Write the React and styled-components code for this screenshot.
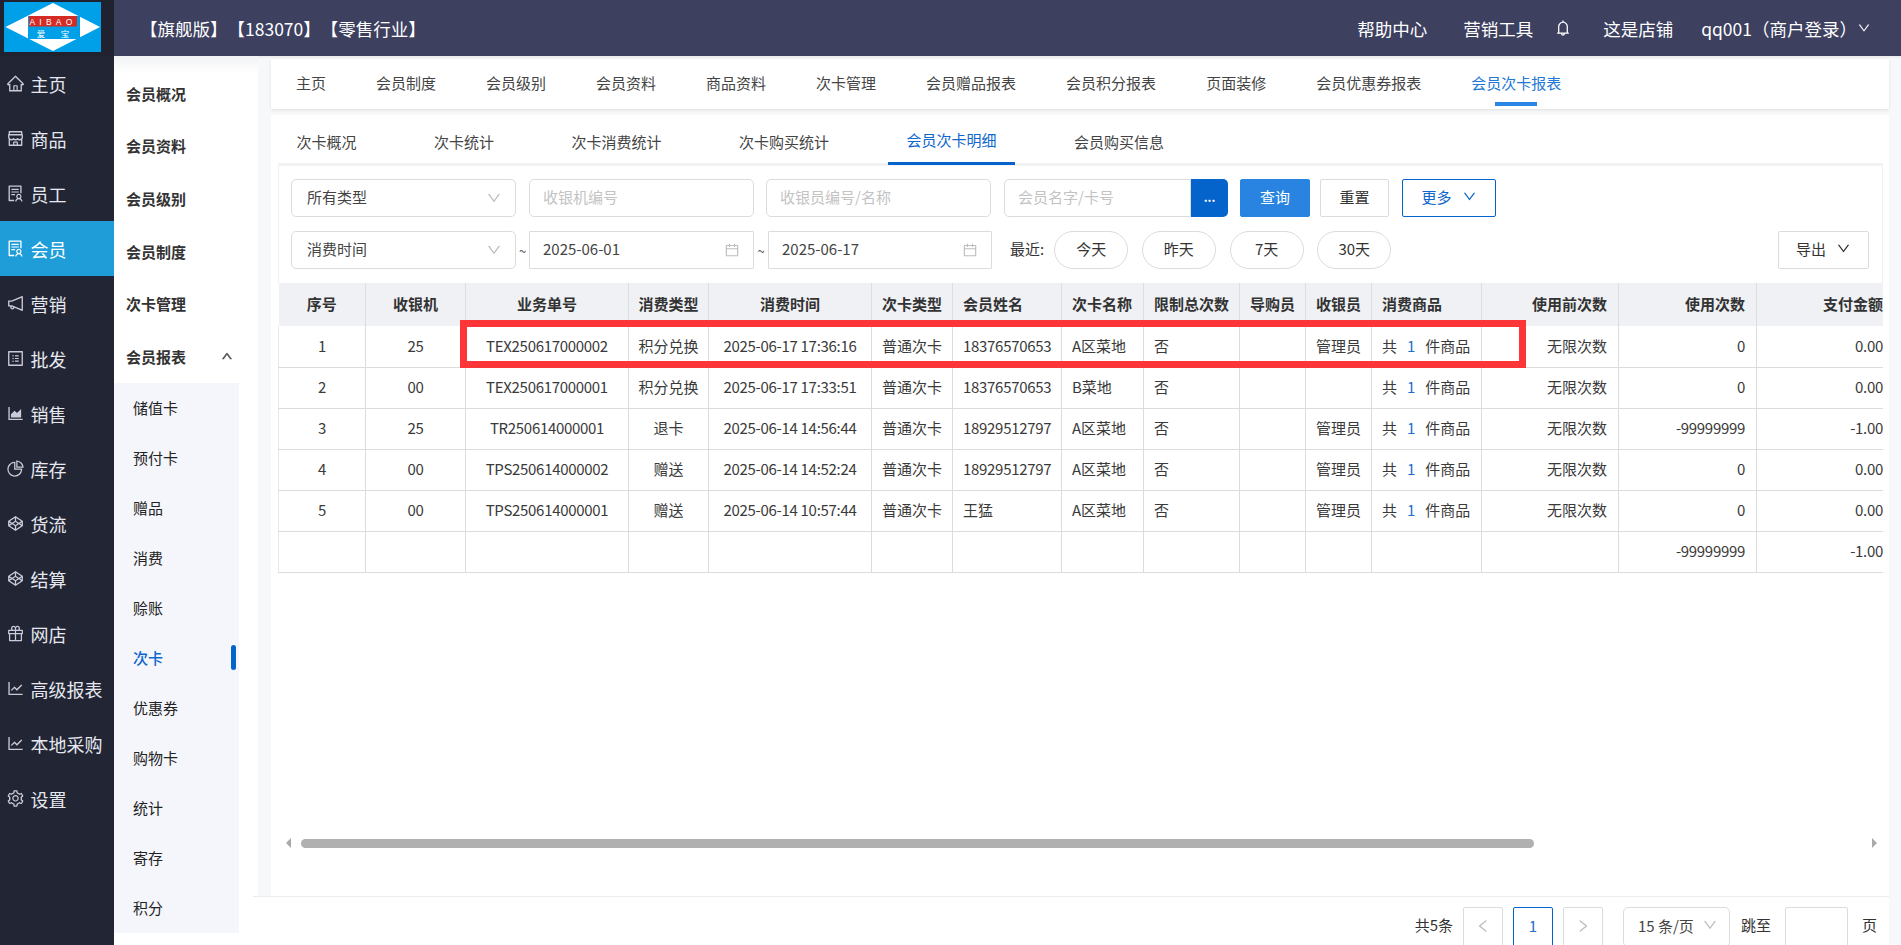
import React from "react";
import styled, { createGlobalStyle } from "styled-components";
import {
  AiOutlineHome, AiOutlineShop, AiOutlineSolution, AiOutlineNotification, AiOutlineProfile,
  AiOutlineAreaChart, AiOutlinePieChart, AiOutlineCodepen, AiOutlineGift, AiOutlineLineChart,
  AiOutlineSetting, AiOutlineBell, AiOutlineCalendar, AiOutlineDown, AiOutlineUp, AiOutlineLeft, AiOutlineRight,
} from "react-icons/ai";

const FONT = `"Noto Sans CJK SC", "Noto Sans", sans-serif`;

const Global = createGlobalStyle`
  html, body { margin: 0; padding: 0; height: 100%; overflow: hidden; }
  body { font-family: ${FONT}; font-size: 15px; color: #333; background: #fff; text-spacing-trim: space-all; }
  * { box-sizing: border-box; }
`;

const Shell = styled.div`
  position: relative; display: flex; width: 1901px; height: 945px; overflow: hidden; background: #fff;
`;
const Sidebar = styled.aside`
  width: 114px; flex: none; background: #222533; display: flex; flex-direction: column;
`;
const LogoBox = styled.div`
  height: 56px; padding: 2px 0 0 4px; background: #20232f;
  svg { display: block; }
`;
const NavItem = styled.div`
  height: 55px; display: flex; align-items: center; padding-left: 6px; gap: 5.5px;
  font-size: 18px; color: ${p => (p.$active ? "#fff" : "#e6e8f0")};
  background: ${p => (p.$active ? "#1e9dd8" : "transparent")};
  svg { width: 19px; height: 19px; flex: none; color: ${p => (p.$active ? "#fff" : "#c9ccd8")}; }
`;
const RightCol = styled.div`
  flex: 1; min-width: 0; display: flex; flex-direction: column;
`;
const TopBar = styled.header`
  height: 56px; flex: none; background: #3d405f; color: #fff; display: flex; align-items: center;
  justify-content: space-between; padding: 0 30px 0 26px;
`;
const Brand = styled.div`
  font-size: 17.5px; white-space: nowrap;
`;
const TopRight = styled.div`
  display: flex; align-items: center; font-size: 17.5px; white-space: nowrap;
`;
const TopLink = styled.span`
  margin-left: ${p => p.$ml}px;
`;
const Bell = styled(AiOutlineBell)`
  margin-left: 21px; width: 18px; height: 18px;
`;
const UserChevron = styled(AiOutlineDown)`
  width: 14px; height: 14px;
`;
const Body = styled.div`
  flex: 1; min-height: 0; display: flex;
`;
const SubNav = styled.nav`
  width: 144px; flex: none; padding-top: 11px; background: linear-gradient(#f2f3f5, #fff 18px);
`;
const SubGroup = styled.div`
  height: 52.6px; display: flex; align-items: center; justify-content: space-between;
  padding: 0 25px 0 12px; font-weight: 700; color: #333; font-size: 15px;
  svg { width: 12px; height: 12px; color: #555; stroke: #555; stroke-width: 70; }
`;
const SubList = styled.div`
  width: 125px; background: #f4f6fb;
`;
const SubItem = styled.div`
  position: relative; height: 50px; display: flex; align-items: center; padding-left: 19px;
  color: ${p => (p.$active ? "#0f66cc" : "#222")}; font-weight: ${p => (p.$active ? 500 : 400)};
  ${p => p.$active && `&::after { content: ""; position: absolute; right: 3px; top: 12px; width: 5px; height: 25px; border-radius: 3px; background: #0563cc; }`}
`;
const Main = styled.main`
  flex: 1; min-width: 0; display: flex; flex-direction: column; background: #f7f8fa;
`;
const Content = styled.div`
  flex: 1; min-height: 0; display: flex; flex-direction: column; padding: 3px 12px 0 13px; background: linear-gradient(#e9e9eb, #f7f8fa 3px);
`;
const TabsCard = styled.div`
  height: 50px; flex: none; background: #fff; box-shadow: 0 1px 3px rgba(0,0,0,.1);
  display: flex; gap: 50px; padding-left: 25px; margin-bottom: 6px;
`;
const Tab = styled.div`
  position: relative; height: 46px; display: flex; align-items: center; color: ${p => (p.$active ? "#2278d4" : "#444")};
  white-space: nowrap;
  ${p => p.$active && `&::after { content: ""; position: absolute; left: 24px; right: 24px; bottom: -1px; height: 4px; background: #2b85e4; }`}
`;
const Panel = styled.section`
  flex: 1; min-height: 0; background: #fff; display: flex; flex-direction: column; padding: 0 6px 0 7px;
`;
const SubTabs = styled.div`
  height: 51px; flex: none; display: flex; border-bottom: 3px solid #f1f2f4;
`;
const SubTab = styled.div`
  height: 50px; padding: 2px 18.5px 0; margin-right: 40.5px; display: flex; align-items: center; white-space: nowrap;
  color: ${p => (p.$active ? "#0f66cc" : "#444")};
  ${p => p.$active && `border-bottom: 3px solid #0563cc;`}
`;
const FilterCard = styled.div`
  flex: none; padding: 13px 13px 14px 12px; display: flex; flex-direction: column; gap: 14px;
  border-left: 1px solid #eff0f2; border-right: 1px solid #eff0f2;
`;
const FilterRow = styled.div`
  display: flex; align-items: center; height: 38px;
`;
const Field = styled.div`
  width: ${p => p.$w}px; margin-right: ${p => p.$mr || 0}px; height: 38px; flex: none; display: flex; align-items: center; justify-content: space-between;
  border: 1px solid #dcdcdc; border-radius: ${p => (p.$flatRight ? "5px 0 0 5px" : p.$square ? "1px" : "5px")};
  padding: 0 13px 3px ${p => p.$pl || 13}px; color: ${p => (p.$placeholder ? "#c3c3c3" : "#444")}; background: #fff;
  svg { width: 16px; height: 16px; color: #bdbdbd; flex: none; transform: translateY(1px); }
`;
const DotButton = styled.div`
  width: 37px; height: 38px; flex: none; margin-right: 12px; background: #0563cc; color: #fff; border-radius: 0 5px 5px 0;
  display: flex; align-items: center; justify-content: center; font-size: 12px; font-weight: 700; padding-bottom: 3px;
`;
const Button = styled.div`
  width: ${p => p.$w}px; margin-right: ${p => p.$mr || 0}px; margin-left: ${p => (p.$end ? "auto" : "0")};
  height: 38px; flex: none; display: flex; align-items: center; justify-content: center; gap: 10px; border-radius: 2px; padding-bottom: 3px;
  background: ${p => (p.$primary ? "#2884e0" : "#fff")}; color: ${p => (p.$primary ? "#fff" : p.$outline ? "#0f66cc" : "#333")};
  border: 1px solid ${p => (p.$primary ? "#2884e0" : p.$outline ? "#0563cc" : "#dcdcdc")};
  svg { width: 15px; height: 15px; }
`;
const Tilde = styled.span`
  width: ${p => p.$w || 14}px; flex: none; text-align: center; color: #555; font-size: 13px;
`;
const RecentLabel = styled.span`
  margin: 0 10px 0 18px; padding-bottom: 3px; white-space: nowrap; color: #333;
`;
const Pill = styled.div`
  width: 74px; height: 38px; flex: none; margin-right: 13.7px; border: 1px solid #dcdcdc; border-radius: 19px; padding-bottom: 3px;
  display: flex; align-items: center; justify-content: center; color: #333;
`;
const TableWrap = styled.div`
  flex: none; overflow: hidden;
`;
const Table = styled.table`
  table-layout: fixed; border-collapse: collapse; width: 1615px;
`;
const Col = styled.col`
  width: ${p => p.$w}px;
`;
const Th = styled.th`
  height: 43px; padding: 0 ${p => (p.$align === "right" ? 11 : p.$align === "left" ? 10 : 0)}px 2px; background: #eff1f5; color: #333; font-weight: 700; font-size: 15px;
  text-align: ${p => p.$align || "center"}; border-right: 1px solid #dcdee2; white-space: nowrap;
`;
const Td = styled.td`
  height: 41px; padding: 0 ${p => (p.$align === "right" ? 11 : p.$align === "left" ? 10 : 0)}px 2px; color: #3a3a3a; font-size: 15px; white-space: nowrap;
  letter-spacing: ${p => (p.$latin ? "-0.3px" : "0")};
  text-align: ${p => p.$align || "center"}; border-right: 1px solid #dcdcdc; border-bottom: 1px solid #dcdcdc;
  &:first-child { border-left: 1px solid #e8e8e8; }
`;
const BlueNum = styled.span`
  color: #1a6fcf; margin: 0 10px;
`;
const ScrollRow = styled.div`
  margin-top: auto; margin-bottom: 47px; height: 12px; flex: none; display: flex; align-items: center; padding: 0 6px 0 8px;
`;
const ArrowLeft = styled.span`
  width: 0; height: 0; border: 5px solid transparent; border-left: 0; border-right: 5px solid #aaa; flex: none;
`;
const ArrowRight = styled.span`
  width: 0; height: 0; border: 5px solid transparent; border-right: 0; border-left: 5px solid #aaa; flex: none;
`;
const Track = styled.div`
  flex: 1; margin: 0 7px 0 10px; height: 9px;
`;
const Thumb = styled.div`
  width: ${p => p.$w}px; height: 9px; border-radius: 5px; background: #b0b0b0;
`;
const Footer = styled.footer`
  height: 49px; flex: none; margin: 0 12px 0 -5px; background: #fff; border-top: 1px solid #ececec; padding: 10px 12px 0 0;
  display: flex; justify-content: flex-end; color: #333;
`;
const PageText = styled.span`
  height: 38px; line-height: 36px; margin-left: ${p => p.$ml || 0}px; white-space: nowrap; flex: none;
`;
const PageBox = styled.div`
  width: 40px; height: 40px; flex: none; margin-left: ${p => p.$ml}px; border: 1px solid ${p => (p.$active ? "#0563cc" : "#dcdcdc")};
  border-radius: 2px; display: flex; align-items: center; justify-content: center; padding-bottom: 3px;
  color: ${p => (p.$active ? "#1a6fcf" : "#bdbdbd")};
  svg { width: 16px; height: 16px; }
`;
const PageSelect = styled.div`
  width: 107px; height: 40px; margin-left: 20px; flex: none; border: 1px solid #dcdcdc; border-radius: 5px;
  display: flex; align-items: center; justify-content: space-between; padding: 0 11px 4px 14px; white-space: nowrap; color: #444;
  svg { width: 16px; height: 16px; color: #bdbdbd; }
`;
const PageInput = styled.div`
  width: 63px; height: 40px; margin-left: 14px; flex: none; border: 1px solid #dcdcdc; border-radius: 2px;
`;
const Annotation = styled.div`
  position: absolute; left: 460px; top: 320px; width: 1066px; height: 48px; border: 7px solid #fc3538; pointer-events: none;
`;

const navItems = [
  [AiOutlineHome, "主页"], [AiOutlineShop, "商品"], [AiOutlineSolution, "员工"], [AiOutlineSolution, "会员", true],
  [AiOutlineNotification, "营销"], [AiOutlineProfile, "批发"], [AiOutlineAreaChart, "销售"], [AiOutlinePieChart, "库存"],
  [AiOutlineCodepen, "货流"], [AiOutlineCodepen, "结算"], [AiOutlineGift, "网店"], [AiOutlineLineChart, "高级报表"],
  [AiOutlineLineChart, "本地采购"], [AiOutlineSetting, "设置"],
];
const subGroups = ["会员概况", "会员资料", "会员级别", "会员制度", "次卡管理"];
const subItems = ["储值卡", "预付卡", "赠品", "消费", "赊账", "次卡", "优惠券", "购物卡", "统计", "寄存", "积分"];
const tabs = ["主页", "会员制度", "会员级别", "会员资料", "商品资料", "次卡管理", "会员赠品报表", "会员积分报表", "页面装修", "会员优惠券报表", "会员次卡报表"];
const subTabs = ["次卡概况", "次卡统计", "次卡消费统计", "次卡购买统计", "会员次卡明细", "会员购买信息"];

const columns = [
  ["序号", 87], ["收银机", 100], ["业务单号", 163], ["消费类型", 80], ["消费时间", 163], ["次卡类型", 81],
  ["会员姓名", 109, "left"], ["次卡名称", 82, "left"], ["限制总次数", 96, "left"], ["导购员", 66, "left"], ["收银员", 66, "left"],
  ["消费商品", 110, "left"], ["使用前次数", 137, "right"], ["使用次数", 138, "right"], ["支付金额", 138, "right"],
];
const rows = [
  ["1", "25", "TEX250617000002", "积分兑换", "2025-06-17 17:36:16", "普通次卡", "18376570653", "A区菜地", "否", "", "管理员", "G", "无限次数", "0", "0.00"],
  ["2", "00", "TEX250617000001", "积分兑换", "2025-06-17 17:33:51", "普通次卡", "18376570653", "B菜地", "否", "", "", "G", "无限次数", "0", "0.00"],
  ["3", "25", "TR250614000001", "退卡", "2025-06-14 14:56:44", "普通次卡", "18929512797", "A区菜地", "否", "", "管理员", "G", "无限次数", "-99999999", "-1.00"],
  ["4", "00", "TPS250614000002", "赠送", "2025-06-14 14:52:24", "普通次卡", "18929512797", "A区菜地", "否", "", "管理员", "G", "无限次数", "0", "0.00"],
  ["5", "00", "TPS250614000001", "赠送", "2025-06-14 10:57:44", "普通次卡", "王猛", "A区菜地", "否", "", "管理员", "G", "无限次数", "0", "0.00"],
  ["", "", "", "", "", "", "", "", "", "", "", "", "", "-99999999", "-1.00"],
];

function Logo() {
  return (
    <svg width="97" height="50" viewBox="0 0 97 50">
      <rect width="97" height="50" fill="#00a0e9" />
      <polygon points="1.5,25 49,1 96,25 49,49" fill="#fff" />
      <rect x="24" y="14" width="52" height="23" fill="#00a0e9" />
      <rect x="25" y="14" width="48" height="10.5" fill="#d52b25" />
      <text x="49" y="23" textAnchor="middle" fontSize="8.5" fill="#fff" letterSpacing="4.2" fontFamily="'Liberation Sans', sans-serif">AIBAO</text>
      <text x="37" y="35" textAnchor="middle" fontSize="8.5" fill="#fff" fontFamily="'Noto Sans CJK SC', sans-serif">爱</text>
      <text x="61" y="35" textAnchor="middle" fontSize="8.5" fill="#fff" fontFamily="'Noto Sans CJK SC', sans-serif">宝</text>
    </svg>
  );
}

function Cell({ value, align }) {
  if (value === "G") return <Td $align={align}>共<BlueNum>1</BlueNum>件商品</Td>;
  return <Td $align={align} $latin={/^[\x00-\x7f]+$/.test(value)}>{value}</Td>;
}

export default function App() {
  return (
    <Shell>
      <Global />
      <Sidebar>
        <LogoBox><Logo /></LogoBox>
        {navItems.map(([Icon, label, active]) => (
          <NavItem key={label} $active={active}><Icon />{label}</NavItem>
        ))}
      </Sidebar>
      <RightCol>
        <TopBar>
          <Brand>【旗舰版】【183070】【零售行业】</Brand>
          <TopRight>
            <TopLink $ml={0}>帮助中心</TopLink>
            <TopLink $ml={36}>营销工具</TopLink>
            <Bell />
            <TopLink $ml={31}>这是店铺</TopLink>
            <TopLink $ml={28}>qq001（商户登录）</TopLink>
            <UserChevron />
          </TopRight>
        </TopBar>
        <Body>
          <SubNav>
            {subGroups.map(g => <SubGroup key={g}>{g}</SubGroup>)}
            <SubGroup>会员报表<AiOutlineUp /></SubGroup>
            <SubList>
              {subItems.map(s => <SubItem key={s} $active={s === "次卡"}>{s}</SubItem>)}
            </SubList>
          </SubNav>
          <Main>
            <Content>
              <TabsCard>
                {tabs.map(t => <Tab key={t} $active={t === "会员次卡报表"}>{t}</Tab>)}
              </TabsCard>
              <Panel>
                <SubTabs>
                  {subTabs.map(t => <SubTab key={t} $active={t === "会员次卡明细"}>{t}</SubTab>)}
                </SubTabs>
                <FilterCard>
                  <FilterRow>
                    <Field $w={225} $mr={13} $pl={15}>所有类型<AiOutlineDown /></Field>
                    <Field $w={225} $mr={12} $placeholder>收银机编号</Field>
                    <Field $w={225} $mr={13} $placeholder>收银员编号/名称</Field>
                    <Field $w={187} $placeholder $flatRight>会员名字/卡号</Field>
                    <DotButton>...</DotButton>
                    <Button $w={70} $mr={10} $primary>查询</Button>
                    <Button $w={69} $mr={13}>重置</Button>
                    <Button $w={94} $outline>更多<AiOutlineDown /></Button>
                  </FilterRow>
                  <FilterRow>
                    <Field $w={225} $pl={15}>消费时间<AiOutlineDown /></Field>
                    <Tilde $w={13}>~</Tilde>
                    <Field $w={225} $square>2025-06-01<AiOutlineCalendar /></Field>
                    <Tilde>~</Tilde>
                    <Field $w={224} $square>2025-06-17<AiOutlineCalendar /></Field>
                    <RecentLabel>最近:</RecentLabel>
                    <Pill>今天</Pill>
                    <Pill>昨天</Pill>
                    <Pill>7天</Pill>
                    <Pill>30天</Pill>
                    <Button $w={91} $end>导出<AiOutlineDown /></Button>
                  </FilterRow>
                </FilterCard>
                <TableWrap>
                  <Table>
                    <colgroup>
                      {columns.map(([name, w]) => <Col key={name} $w={w} />)}
                    </colgroup>
                    <thead>
                      <tr>{columns.map(([name, , align]) => <Th key={name} $align={align}>{name}</Th>)}</tr>
                    </thead>
                    <tbody>
                      {rows.map((r, i) => (
                        <tr key={i}>{r.map((v, j) => <Cell key={j} value={v} align={columns[j][2]} />)}</tr>
                      ))}
                    </tbody>
                  </Table>
                </TableWrap>
                <ScrollRow>
                  <ArrowLeft />
                  <Track><Thumb $w={1233} /></Track>
                  <ArrowRight />
                </ScrollRow>
              </Panel>
            </Content>
            <Footer>
              <PageText>共5条</PageText>
              <PageBox $ml={10}><AiOutlineLeft /></PageBox>
              <PageBox $ml={10} $active>1</PageBox>
              <PageBox $ml={10}><AiOutlineRight /></PageBox>
              <PageSelect>15 条/页<AiOutlineDown /></PageSelect>
              <PageText $ml={11}>跳至</PageText>
              <PageInput />
              <PageText $ml={14}>页</PageText>
            </Footer>
          </Main>
        </Body>
      </RightCol>
      <Annotation />
    </Shell>
  );
}
